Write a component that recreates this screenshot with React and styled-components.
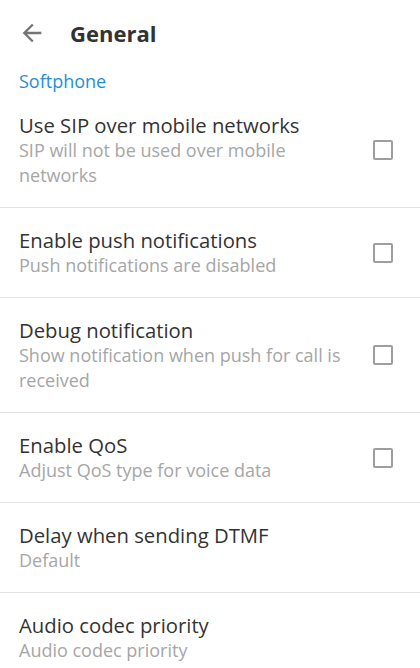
import styled, { createGlobalStyle } from "styled-components";

const GlobalStyle = createGlobalStyle`
  body {
    margin: 0;
    background: #ffffff;
    font-family: "Open Sans", "Noto Sans", sans-serif;
  }
`;

const Screen = styled.div`
  width: 420px;
  height: 668px;
  overflow: hidden;
  background: #ffffff;
`;

const Toolbar = styled.header`
  display: flex;
  align-items: center;
  height: 66px;
  padding-left: 18px;
`;

const BackButton = styled.button`
  display: flex;
  align-items: center;
  justify-content: center;
  width: 28px;
  height: 28px;
  padding: 0;
  border: none;
  background: none;
  color: #757575;
`;

const Title = styled.h1`
  margin: 0 0 0 24px;
  font-size: 22px;
  font-weight: 700;
  color: #333333;
`;

const SectionTitle = styled.div`
  padding: 3px 19px 0;
  height: 24px;
  font-size: 18px;
  line-height: 24px;
  color: #1e8fd6;
`;

const Row = styled.div`
  display: flex;
  align-items: center;
  padding: 19px 27px 19px 19px;
  border-bottom: ${(p) => (p.last ? "none" : "1px solid #e3e3e3")};
`;

const Texts = styled.div`
  flex: 1;
  min-width: 0;
  padding-right: 20px;
`;

const RowTitle = styled.div`
  font-size: 20.3px;
  line-height: 26px;
  color: #333333;
`;

const RowSummary = styled.div`
  font-size: 18px;
  line-height: 25px;
  color: #a6a6a6;
`;

const Checkbox = styled.div`
  flex: none;
  width: 20px;
  height: 20px;
  box-sizing: border-box;
  border: 2px solid #9e9e9e;
  border-radius: 2px;
`;

const items = [
  { title: "Use SIP over mobile networks", summary: "SIP will not be used over mobile networks", check: true },
  { title: "Enable push notifications", summary: "Push notifications are disabled", check: true },
  { title: "Debug notification", summary: "Show notification when push for call is received", check: true },
  { title: "Enable QoS", summary: "Adjust QoS type for voice data", check: true },
  { title: "Delay when sending DTMF", summary: "Default" },
  { title: "Audio codec priority", summary: "Audio codec priority" },
];

function ArrowBack() {
  return (
    <svg width="28" height="28" viewBox="0 0 24 24" fill="currentColor">
      <path d="M20 11H7.83l5.59-5.59L12 4l-8 8 8 8 1.41-1.41L7.83 13H20v-2z" />
    </svg>
  );
}

export default function App() {
  return (
    <Screen>
      <GlobalStyle />
      <Toolbar>
        <BackButton>
          <ArrowBack />
        </BackButton>
        <Title>General</Title>
      </Toolbar>
      <SectionTitle>Softphone</SectionTitle>
      {items.map((it, i) => (
        <Row key={it.title} last={i === items.length - 1}>
          <Texts>
            <RowTitle>{it.title}</RowTitle>
            <RowSummary>{it.summary}</RowSummary>
          </Texts>
          {it.check && <Checkbox />}
        </Row>
      ))}
    </Screen>
  );
}
